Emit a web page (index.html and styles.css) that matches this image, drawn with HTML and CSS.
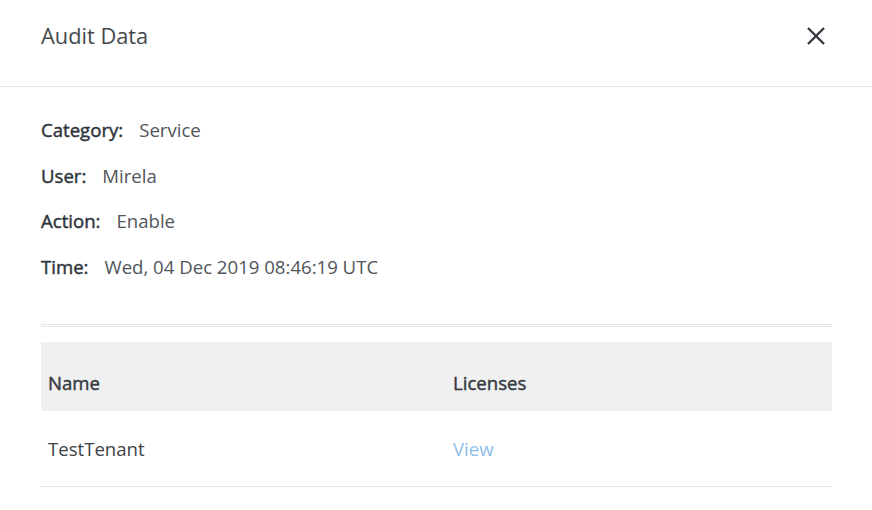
FILE: index.html
```html
<!DOCTYPE html>
<html>
<head>
<meta charset="utf-8">
<link rel="stylesheet" href="styles.css">
</head>
<body>
<div class="modal">
  <div class="modal-header">
    <h2 class="modal-title">Audit Data</h2>
    <button class="close" aria-label="Close">
      <svg width="20" height="20" viewBox="0 0 20 20"><path d="M2 2 L18 18 M18 2 L2 18" stroke="#343a40" stroke-width="2.4" fill="none"/></svg>
    </button>
  </div>
  <div class="modal-body">
    <dl class="details">
      <div class="detail"><dt>Category:</dt><dd>Service</dd></div>
      <div class="detail"><dt>User:</dt><dd>Mirela</dd></div>
      <div class="detail"><dt>Action:</dt><dd>Enable</dd></div>
      <div class="detail"><dt>Time:</dt><dd>Wed, 04 Dec 2019 08:46:19 UTC</dd></div>
    </dl>
    <hr class="sep">
    <table class="grid">
      <thead>
        <tr><th class="col-name">Name</th><th>Licenses</th></tr>
      </thead>
      <tbody>
        <tr><td>TestTenant</td><td><a class="link" href="#">View</a></td></tr>
      </tbody>
    </table>
  </div>
</div>
</body>
</html>
```
FILE: styles.css
```css
html, body {
  margin: 0;
  padding: 0;
  background: #fff;
}
body {
  font-family: "Open Sans", "Liberation Sans", sans-serif;
  color: #333;
  width: 872px;
  height: 510px;
  overflow: hidden;
}
.modal-header {
  height: 87px;
  border-bottom: 1px solid #e9e9e9;
  display: flex;
  align-items: center;
  justify-content: space-between;
  padding: 0 46px 0 41px;
  box-sizing: border-box;
}
.modal-title {
  margin: 0;
  font-size: 21.8px;
  font-weight: 400;
  color: #45494d;
  margin-top: -15px;
}
.close {
  background: none;
  border: 0;
  padding: 0;
  width: 20px;
  height: 20px;
  margin-top: -14px;
  display: flex;
}
.modal-body {
  padding: 31px 40px 0 41px;
}
.details {
  margin: 0;
}
.detail {
  display: flex;
  align-items: baseline;
  height: 45.6px;
  line-height: 24px;
  font-size: 18.6px;
}
.detail dt {
  font-weight: 400;
  -webkit-text-stroke: 0.45px #2f353b;
  color: #2f353b;
  margin-right: 16px;
}
.detail dd {
  margin: 0;
  color: #50555a;
}
.sep {
  margin: 24px 0 15px;
  height: 1px;
  border: 1px solid #e8e8e8;
  padding: 0;
}
.grid {
  width: 100%;
  border-collapse: collapse;
  font-size: 18.6px;
}
.grid th {
  background: #f0f0f0;
  text-align: left;
  font-weight: 400;
  -webkit-text-stroke: 0.45px #343a40;
  color: #343a40;
  height: 69px;
  box-sizing: border-box;
  padding: 28px 7px 16px;
  line-height: 25px;
}
.grid .col-name {
  width: 405px;
}
.grid td {
  height: 75px;
  box-sizing: border-box;
  padding: 0 7px;
  border-bottom: 1px solid #e6e6e6;
  color: #3d4145;
}
.link {
  color: #8fbde9;
  text-decoration: none;
}
```
